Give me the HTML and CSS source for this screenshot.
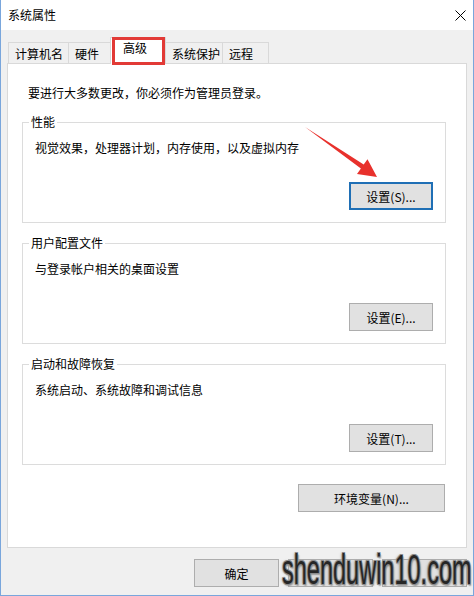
FILE: index.html
```html
<!DOCTYPE html>
<html lang="zh-CN">
<head>
    <meta charset="UTF-8">
    <meta name="viewport" content="width=device-width, initial-scale=1.0">
    <title>系统属性</title>
    <link rel="stylesheet" href="styles.css">
</head>
<body>
    <div class="window">
        <header class="titlebar">
            <span class="title">系统属性</span>
            <svg class="close-icon" width="11" height="11" viewBox="0 0 11 11">
                <path d="M0.5 0.5 L10.5 10.5 M10.5 0.5 L0.5 10.5" stroke="#000" stroke-width="1" fill="none"/>
            </svg>
        </header>

        <div class="dialog-body">
            <div class="tabs">
                <div class="tab tab-name">计算机名</div>
                <div class="tab tab-hw">硬件</div>
                <div class="tab tab-adv active">高级</div>
                <div class="tab tab-prot">系统保护</div>
                <div class="tab tab-remote">远程</div>
            </div>

            <div class="panel">
                <p class="intro">要进行大多数更改，你必须作为管理员登录。</p>

                <div class="group">
                    <div class="group-title">性能</div>
                    <p class="group-desc">视觉效果，处理器计划，内存使用，以及虚拟内存</p>
                    <button class="btn focused">设置(S)...</button>
                </div>

                <div class="group">
                    <div class="group-title">用户配置文件</div>
                    <p class="group-desc">与登录帐户相关的桌面设置</p>
                    <button class="btn">设置(E)...</button>
                </div>

                <div class="group">
                    <div class="group-title">启动和故障恢复</div>
                    <p class="group-desc">系统启动、系统故障和调试信息</p>
                    <button class="btn">设置(T)...</button>
                </div>

                <button class="btn btn-wide">环境变量(N)...</button>
            </div>

            <div class="dialog-buttons">
                <button class="btn btn-dialog">确定</button>
                <button class="btn btn-dialog"></button>
                <button class="btn btn-dialog"></button>
            </div>
        </div>

        <!-- annotation arrow pointing at the performance button -->
        <svg class="arrow" width="80" height="62" viewBox="0 0 80 62">
            <polygon points="4,7 62.7,44.6 66.5,39.2 76,57 56,54 59.9,48.6" fill="#e8312c"/>
        </svg>

        <div class="watermark">shenduwin10.com</div>
    </div>
</body>
</html>
```

FILE: styles.css
```css
body {
    margin: 0;
    padding: 0;
    font-family: "Noto Sans CJK SC", "Noto Sans", sans-serif;
    font-size: 12px;
    color: #000;
    background-color: #f0f0f0;
}
.window {
    position: relative;
    width: 474px;
    height: 596px;
    box-sizing: border-box;
    border: 1px solid #79a6dc;
    border-top: none;
    background-color: #f0f0f0;
    overflow: hidden;
}
.titlebar {
    height: 30px;
    display: flex;
    align-items: center;
    justify-content: space-between;
    padding: 0 7px;
    background-color: #ffffff;
}
.title {
    line-height: 16px;
}
.close-icon {
    display: block;
}
.dialog-body {
    padding: 7px 6px 0 6px;
}
.tabs {
    display: flex;
    align-items: flex-end;
    padding-left: 1px;
    position: relative;
    z-index: 1;
}
.tab {
    height: 21px;
    line-height: 22px;
    box-sizing: border-box;
    padding: 0 6px;
    border: 1px solid #d9d9d9;
    border-bottom: none;
    margin-right: -1px;
    background-color: #f0f0f0;
    white-space: nowrap;
}
.tab-name { width: 61px; }
.tab-hw { width: 44px; }
.tab-prot { width: 58px; }
.tab-remote { width: 47px; }
.tab.active {
    position: relative;
    width: 56px;
    height: 27px;
    line-height: 20px;
    padding-left: 12px;
    margin-left: -1px;
    margin-bottom: -1px;
    background-color: #ffffff;
    z-index: 2;
}
/* red highlight box drawn over the selected tab */
.tab.active::after {
    content: "";
    position: absolute;
    top: -1px;
    left: 1px;
    right: 0;
    bottom: -1px;
    border: 3px solid #e23a36;
}
.panel {
    height: 485px;
    box-sizing: border-box;
    border: 1px solid #d9d9d9;
    background-color: #ffffff;
    padding: 0 20px 0 14px;
    display: flex;
    flex-direction: column;
}
.intro {
    margin: 21px 0 0 6px;
    line-height: 16px;
}
.group {
    margin-top: 21px;
    border: 1px solid #dcdcdc;
    padding: 0 12px 12px 12px;
    display: flex;
    flex-direction: column;
}
.group + .group {
    margin-top: 20px;
}
.group-title {
    align-self: flex-start;
    margin: -9px 0 0 -6px;
    padding: 0 2px;
    line-height: 16px;
    background-color: #ffffff;
}
.group-desc {
    margin: 10px 0 0 0;
    line-height: 16px;
}
.btn {
    font-family: "Noto Sans CJK SC", "Noto Sans", sans-serif;
    font-size: 12px;
    color: #000;
    background-color: #e1e1e1;
    border: 1px solid #adadad;
    height: 28px;
    width: 84px;
    padding: 0;
    margin: 0;
    box-sizing: border-box;
}
.group .btn {
    align-self: flex-end;
    margin-top: 26px;
}
.btn.focused {
    border: 2px solid #1f6fb5;
}
.btn-wide {
    align-self: flex-end;
    width: 147px;
    margin-top: 19px;
    margin-right: 1px;
}
.dialog-buttons {
    display: flex;
    justify-content: flex-end;
    gap: 9px;
    margin-top: 11px;
}
.btn-dialog {
    width: 85px;
}
.arrow {
    position: absolute;
    left: 300px;
    top: 120px;
}
.watermark {
    position: absolute;
    left: 281px;
    top: 546px;
    font-family: "Liberation Sans", Arial, sans-serif;
    font-size: 42px;
    line-height: 48px;
    color: #262626;
    transform: scaleX(0.56);
    transform-origin: left top;
    white-space: nowrap;
    text-shadow: 1px 1px 0 #8c8c8c, -1px -1px 0 #8c8c8c, 1px -1px 0 #8c8c8c, -1px 1px 0 #8c8c8c,
        2px 2px 2px #9a9a9a, -2px 0 3px #a5a5a5;
}
```
